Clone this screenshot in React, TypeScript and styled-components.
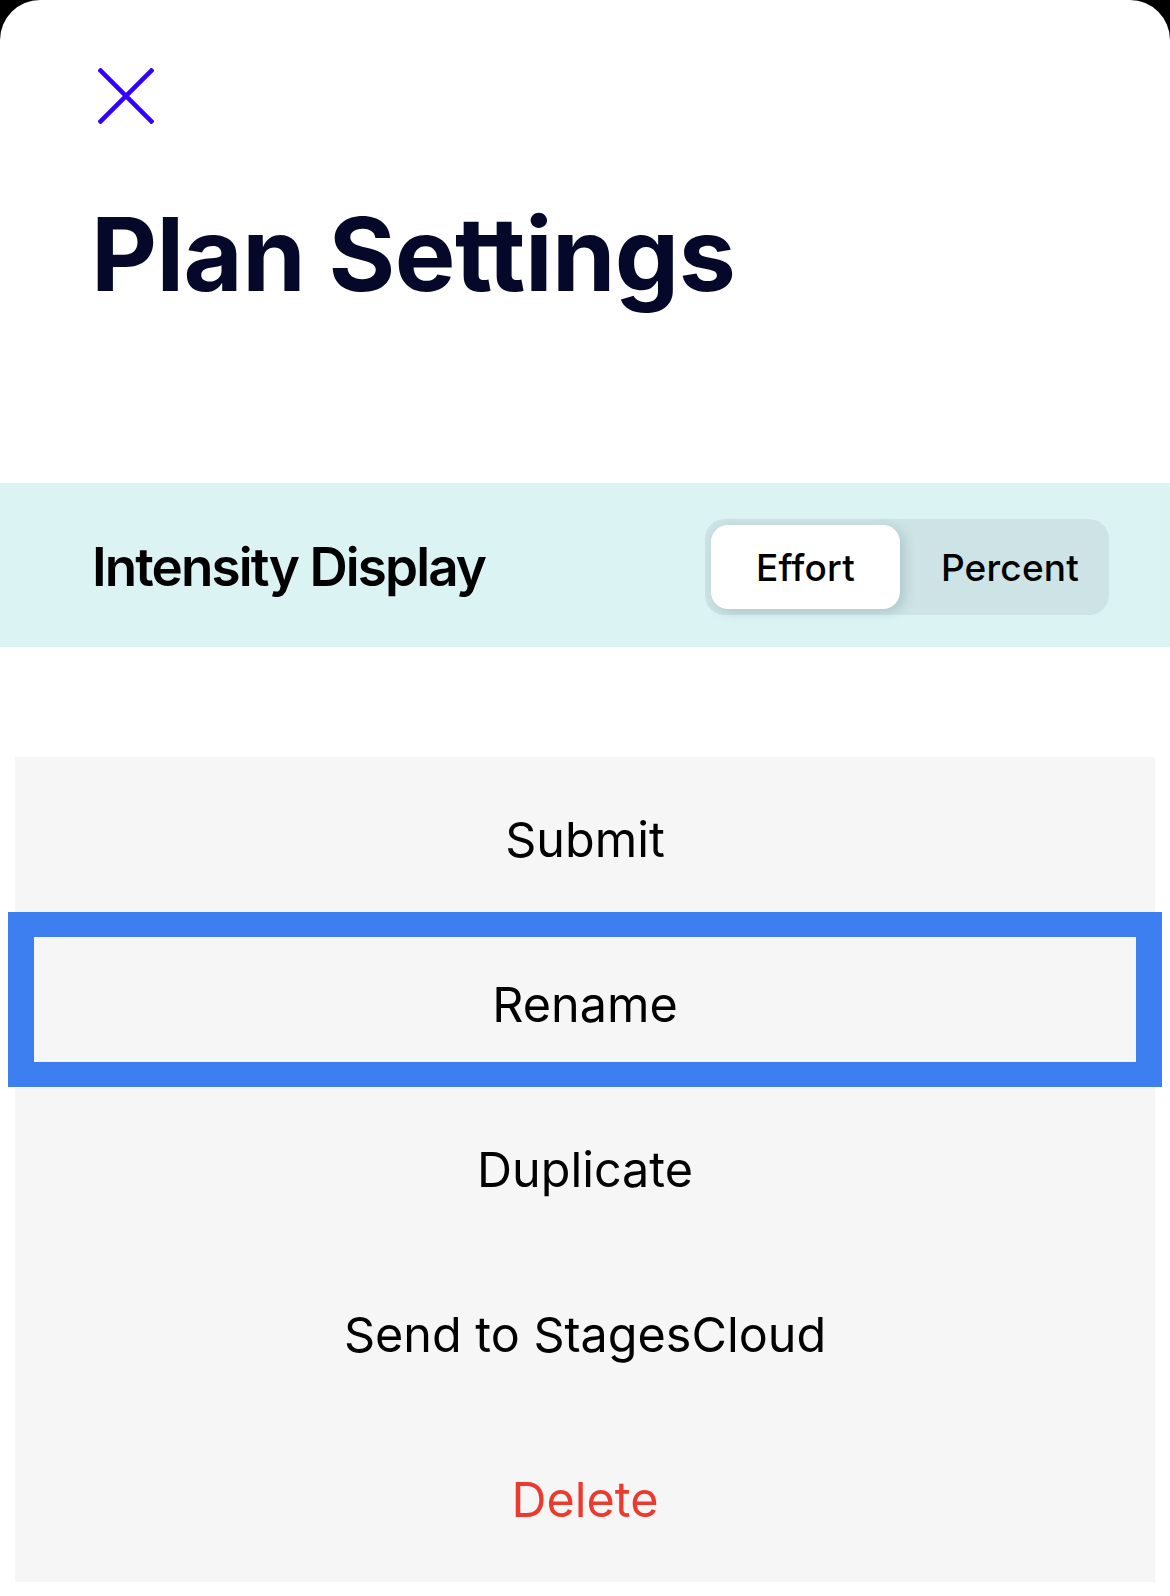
import React from "react";
import styled, { createGlobalStyle } from "styled-components";

const GlobalStyle = createGlobalStyle`
  html, body {
    margin: 0;
    padding: 0;
    background: #000000;
  }

  body {
    font-family: "Inter", "Noto Sans", sans-serif;
    -webkit-font-smoothing: antialiased;
  }
`;

type ActionItem = {
  label: string;
  danger?: boolean;
  focused?: boolean;
};

const actions: ActionItem[] = [
  { label: "Submit" },
  { label: "Rename", focused: true },
  { label: "Duplicate" },
  { label: "Send to StagesCloud" },
  { label: "Delete", danger: true },
];

function CloseIcon() {
  return (
    <svg width="56" height="56" viewBox="0 0 56 56" fill="none">
      <path d="M1 1L55 55M55 1L1 55" stroke="#3300ff" strokeWidth="4.5" />
    </svg>
  );
}

function App() {
  const [mode, setMode] = React.useState<"effort" | "percent">("effort");

  return (
    <>
      <GlobalStyle />
      <Sheet>
        <CloseButton aria-label="Close">
          <CloseIcon />
        </CloseButton>
        <Title>Plan Settings</Title>

        <SettingBand>
          <SettingLabel>Intensity Display</SettingLabel>
          <Segmented>
            <Segment
              $active={mode === "effort"}
              $width={189}
              onClick={() => setMode("effort")}
            >
              Effort
            </Segment>
            <Segment
              $active={mode === "percent"}
              $width={203}
              $shift={17}
              onClick={() => setMode("percent")}
            >
              Percent
            </Segment>
          </Segmented>
        </SettingBand>

        <ActionList>
          {actions.map((item) => (
            <ActionRow key={item.label} $focused={item.focused}>
              <ActionLabel $danger={item.danger}>{item.label}</ActionLabel>
            </ActionRow>
          ))}
        </ActionList>
      </Sheet>
    </>
  );
}

const Sheet = styled.div`
  min-height: 1596px;
  background: #ffffff;
  border-radius: 40px 40px 0 0;
  padding-top: 68px;
  box-sizing: border-box;
  display: flex;
  flex-direction: column;
`;

const CloseButton = styled.button`
  width: 56px;
  height: 56px;
  margin-left: 98px;
  padding: 0;
  border: none;
  background: transparent;
  display: flex;
  cursor: pointer;
`;

const Title = styled.h1`
  margin: 79px 0 0 91px;
  font-family: "Inter", sans-serif;
  font-weight: 700;
  font-size: 102px;
  line-height: 1;
  letter-spacing: -0.6px;
  color: #050829;
`;

const SettingBand = styled.div`
  margin-top: 178px;
  height: 164px;
  background: #dcf3f4;
  display: flex;
  align-items: center;
  justify-content: space-between;
  padding: 4px 61px 0 92px;
  box-sizing: border-box;
`;

const SettingLabel = styled.div`
  font-family: "Inter", sans-serif;
  font-weight: 600;
  font-size: 53px;
  letter-spacing: -1.9px;
  color: #000000;
`;

const Segmented = styled.div`
  display: flex;
  padding: 6px;
  height: 96px;
  box-sizing: border-box;
  background: #cde3e5;
  border-radius: 20px;
`;

const Segment = styled.button<{ $active: boolean; $width: number; $shift?: number }>`
  width: ${(p) => p.$width}px;
  height: 84px;
  padding: 0 0 0 ${(p) => p.$shift ?? 0}px;
  border: none;
  border-radius: 17px;
  background: ${(p) => (p.$active ? "#ffffff" : "transparent")};
  box-shadow: ${(p) => (p.$active ? "4px 3px 12px rgba(60, 100, 105, 0.22)" : "none")};
  font-family: "Inter", sans-serif;
  font-weight: 500;
  font-size: 37px;
  letter-spacing: 0.2px;
  color: #000000;
  cursor: pointer;
`;

const ActionList = styled.div`
  margin: 110px 15px 0;
  background: #f6f6f6;
  display: flex;
  flex-direction: column;
`;

const ActionRow = styled.div<{ $focused?: boolean }>`
  position: relative;
  height: 165px;
  display: flex;
  align-items: center;
  justify-content: center;

  ${(p) =>
    p.$focused &&
    `
    &::after {
      content: "";
      position: absolute;
      top: -10px;
      left: -7px;
      right: -7px;
      bottom: 0;
      border-style: solid;
      border-color: #3d7ef1;
      border-width: 25px 26px;
    }
  `}
`;

const ActionLabel = styled.span<{ $danger?: boolean }>`
  font-family: "Inter", sans-serif;
  font-weight: 400;
  font-size: 48.5px;
  letter-spacing: 0;
  color: ${(p) => (p.$danger ? "#eb3a2e" : "#000000")};
`;

export default App;
